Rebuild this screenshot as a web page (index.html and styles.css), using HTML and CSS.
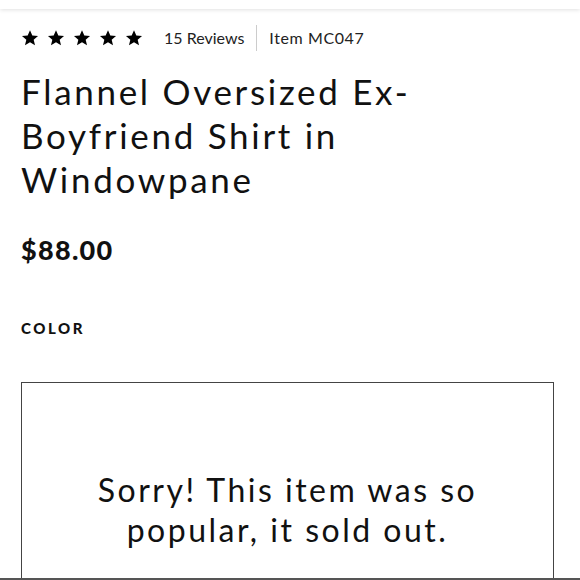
FILE: index.html
```html
<!DOCTYPE html>
<html>
<head>
<meta charset="utf-8">
<link rel="stylesheet" href="styles.css">
</head>
<body>
<div class="topbar"></div>
<main class="product">
  <div class="meta">
    <div class="stars">
      <svg viewBox="0 0 24 24"><path d="M12 1.5l3.1 7.1 7.6.7-5.8 5 1.8 7.5L12 17.8l-6.7 4 1.8-7.5-5.8-5 7.6-.7z"/></svg>
      <svg viewBox="0 0 24 24"><path d="M12 1.5l3.1 7.1 7.6.7-5.8 5 1.8 7.5L12 17.8l-6.7 4 1.8-7.5-5.8-5 7.6-.7z"/></svg>
      <svg viewBox="0 0 24 24"><path d="M12 1.5l3.1 7.1 7.6.7-5.8 5 1.8 7.5L12 17.8l-6.7 4 1.8-7.5-5.8-5 7.6-.7z"/></svg>
      <svg viewBox="0 0 24 24"><path d="M12 1.5l3.1 7.1 7.6.7-5.8 5 1.8 7.5L12 17.8l-6.7 4 1.8-7.5-5.8-5 7.6-.7z"/></svg>
      <svg viewBox="0 0 24 24"><path d="M12 1.5l3.1 7.1 7.6.7-5.8 5 1.8 7.5L12 17.8l-6.7 4 1.8-7.5-5.8-5 7.6-.7z"/></svg>
    </div>
    <span class="reviews">15 Reviews</span>
    <span class="divider"></span>
    <span class="item">Item MC047</span>
  </div>
  <h1 class="title">Flannel Oversized Ex-<br>Boyfriend Shirt in<br>Windowpane</h1>
  <div class="price">$88.00</div>
  <div class="label">Color</div>
  <div class="soldout">
    <p>Sorry! This item was so<br>popular, it sold out.</p>
  </div>
</main>
<div class="bottomline"></div>
</body>
</html>
```
FILE: styles.css
```css
html, body {
  margin: 0;
  padding: 0;
  background: #fff;
  height: 580px;
  overflow: hidden;
}
body {
  font-family: Lato, "Open Sans", sans-serif;
  color: #111;
  position: relative;
}
.topbar {
  height: 9px;
  background: #fff;
  box-shadow: 0 1px 4px rgba(0,0,0,0.12);
  position: relative;
  z-index: 1;
}
.product {
  padding: 0 26px 0 21px;
}
.meta {
  display: flex;
  align-items: center;
  height: 30px;
  margin-top: 13px;
}
.stars {
  display: flex;
  gap: 8px;
}
.stars svg {
  width: 18px;
  height: 18px;
  fill: #000;
  display: block;
  margin-top: 2px;
}
.reviews {
  font-size: 16px;
  margin-left: 21px;
  color: #222;
}
.divider {
  width: 1px;
  height: 26px;
  background: #ccc;
  margin: 2px 12px 0 12px;
}
.item {
  font-size: 16px;
  letter-spacing: 0.6px;
  color: #222;
}
.title {
  font-weight: 400;
  font-size: 35px;
  line-height: 44px;
  margin: 17px 0 0;
  letter-spacing: 2.7px;
}
.price {
  font-weight: 900;
  font-size: 27px;
  margin-top: 33px;
  line-height: 32px;
  letter-spacing: 1.3px;
}
.label {
  font-weight: 900;
  text-transform: uppercase;
  font-size: 15px;
  letter-spacing: 2.6px;
  margin-top: 52px;
  line-height: 20px;
}
.soldout {
  margin-top: 44px;
  border: 1px solid #444;
  border-bottom: none;
  height: 220px;
  display: flex;
  align-items: flex-end;
  justify-content: center;
}
.soldout p {
  margin: 0 0 53px;
  text-align: center;
  font-size: 32px;
  line-height: 40px;
  letter-spacing: 2.5px;
}
.bottomline {
  position: absolute;
  left: 0;
  right: 0;
  top: 578px;
  height: 2px;
  background: #555;
}
```
